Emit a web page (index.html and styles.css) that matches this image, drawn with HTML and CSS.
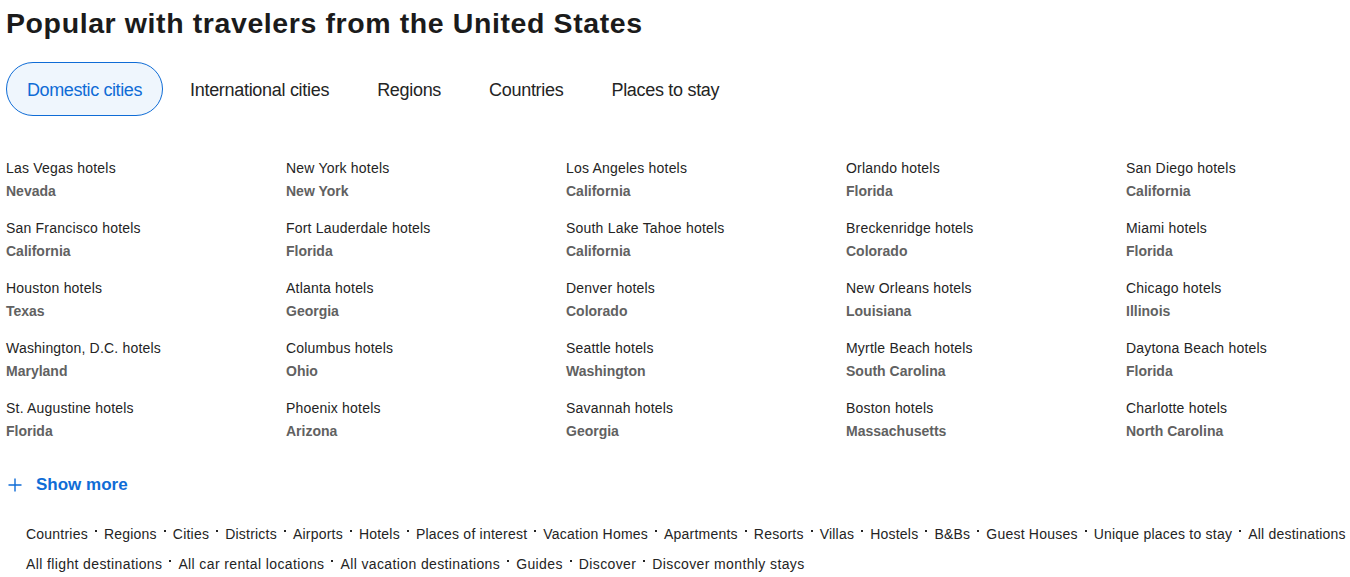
FILE: index.html
```html
<!DOCTYPE html>
<html lang="en">
<head>
<meta charset="utf-8">
<title>Popular with travelers from the United States</title>
<link rel="stylesheet" href="styles.css">
</head>
<body>
<main class="page">
  <h2 class="title">Popular with travelers from the United States</h2>
  <nav class="tabs">
    <button class="tab active">Domestic cities</button>
    <button class="tab">International cities</button>
    <button class="tab">Regions</button>
    <button class="tab">Countries</button>
    <button class="tab">Places to stay</button>
  </nav>
  <ul class="grid">
    <li class="entry"><a class="name">Las Vegas hotels</a><span class="state">Nevada</span></li>
    <li class="entry"><a class="name">New York hotels</a><span class="state">New York</span></li>
    <li class="entry"><a class="name">Los Angeles hotels</a><span class="state">California</span></li>
    <li class="entry"><a class="name">Orlando hotels</a><span class="state">Florida</span></li>
    <li class="entry"><a class="name">San Diego hotels</a><span class="state">California</span></li>
    <li class="entry"><a class="name">San Francisco hotels</a><span class="state">California</span></li>
    <li class="entry"><a class="name">Fort Lauderdale hotels</a><span class="state">Florida</span></li>
    <li class="entry"><a class="name">South Lake Tahoe hotels</a><span class="state">California</span></li>
    <li class="entry"><a class="name">Breckenridge hotels</a><span class="state">Colorado</span></li>
    <li class="entry"><a class="name">Miami hotels</a><span class="state">Florida</span></li>
    <li class="entry"><a class="name">Houston hotels</a><span class="state">Texas</span></li>
    <li class="entry"><a class="name">Atlanta hotels</a><span class="state">Georgia</span></li>
    <li class="entry"><a class="name">Denver hotels</a><span class="state">Colorado</span></li>
    <li class="entry"><a class="name">New Orleans hotels</a><span class="state">Louisiana</span></li>
    <li class="entry"><a class="name">Chicago hotels</a><span class="state">Illinois</span></li>
    <li class="entry"><a class="name">Washington, D.C. hotels</a><span class="state">Maryland</span></li>
    <li class="entry"><a class="name">Columbus hotels</a><span class="state">Ohio</span></li>
    <li class="entry"><a class="name">Seattle hotels</a><span class="state">Washington</span></li>
    <li class="entry"><a class="name">Myrtle Beach hotels</a><span class="state">South Carolina</span></li>
    <li class="entry"><a class="name">Daytona Beach hotels</a><span class="state">Florida</span></li>
    <li class="entry"><a class="name">St. Augustine hotels</a><span class="state">Florida</span></li>
    <li class="entry"><a class="name">Phoenix hotels</a><span class="state">Arizona</span></li>
    <li class="entry"><a class="name">Savannah hotels</a><span class="state">Georgia</span></li>
    <li class="entry"><a class="name">Boston hotels</a><span class="state">Massachusetts</span></li>
    <li class="entry"><a class="name">Charlotte hotels</a><span class="state">North Carolina</span></li>
  </ul>
  <button class="more">
    <svg class="plus" width="14" height="14" viewBox="0 0 14 14" aria-hidden="true"><path d="M7 0.5V13.5M0.5 7H13.5" stroke="currentColor" stroke-width="1.4" fill="none"/></svg>
    <span>Show more</span>
  </button>
  <footer class="links">
    <div class="row">
      <a class="link">Countries</a><a class="link">Regions</a><a class="link">Cities</a><a class="link">Districts</a><a class="link">Airports</a><a class="link">Hotels</a><a class="link">Places of interest</a><a class="link">Vacation Homes</a><a class="link">Apartments</a><a class="link">Resorts</a><a class="link">Villas</a><a class="link">Hostels</a><a class="link">B&amp;Bs</a><a class="link">Guest Houses</a><a class="link">Unique places to stay</a><a class="link">All destinations</a>
    </div>
    <div class="row">
      <a class="link">All flight destinations</a><a class="link">All car rental locations</a><a class="link">All vacation destinations</a><a class="link">Guides</a><a class="link">Discover</a><a class="link">Discover monthly stays</a>
    </div>
  </footer>
</main>
</body>
</html>
```

FILE: styles.css
```css
* { box-sizing: border-box; }

html, body {
  margin: 0;
  padding: 0;
  background: #ffffff;
  overflow: hidden;
}

body {
  font-family: "Segoe UI", "Liberation Sans", Arial, sans-serif;
  color: #242424;
}

.page {
  padding: 5px 6px 0 6px;
  display: flex;
  flex-direction: column;
}

.title {
  margin: 0;
  font-size: 28.5px;
  line-height: 36px;
  font-weight: 700;
  letter-spacing: 0.6px;
  color: #1b1b1b;
}

.tabs {
  display: flex;
  gap: 6px;
  margin-top: 21px;
}

.tab {
  font-family: inherit;
  font-size: 18px;
  letter-spacing: -0.3px;
  height: 54px;
  padding: 2px 20px 0 20px;
  border: 1px solid transparent;
  border-radius: 27px;
  background: transparent;
  color: #242424;
  cursor: pointer;
}

.tab.active {
  background: #eff6fd;
  border-color: #0f6cd6;
  color: #0f6cd6;
  letter-spacing: -0.4px;
}

.grid {
  list-style: none;
  margin: 41px 0 0 0;
  padding: 0;
  display: grid;
  grid-template-columns: repeat(5, minmax(0, 1fr));
  column-gap: 62px;
  row-gap: 14px;
}

.entry {
  display: flex;
  flex-direction: column;
}

.name {
  font-size: 14px;
  line-height: 23px;
  letter-spacing: 0.2px;
  color: #242424;
  white-space: nowrap;
}

.state {
  font-size: 14px;
  line-height: 23px;
  font-weight: 700;
  color: #616161;
  white-space: nowrap;
}

.more {
  align-self: flex-start;
  display: flex;
  align-items: center;
  gap: 14px;
  margin-top: 30px;
  padding: 0 0 0 2px;
  border: 0;
  background: transparent;
  color: #0f6cd6;
  font-family: inherit;
  font-size: 17px;
  font-weight: 700;
  line-height: 24px;
  cursor: pointer;
}

.plus { display: block; }

.links {
  margin-top: 22px;
  padding-left: 20px;
  display: flex;
  flex-direction: column;
}

.row {
  display: flex;
  white-space: nowrap;
  line-height: 30px;
  font-size: 14px;
  letter-spacing: 0.22px;
}

.row + .row {
  letter-spacing: 0.38px;
}

.link {
  color: #242424;
  display: inline-flex;
  align-items: center;
}

.link + .link::before {
  content: "";
  width: 2px;
  height: 2px;
  background: #242424;
  margin: 0 7px 6px 7px;
}
```
